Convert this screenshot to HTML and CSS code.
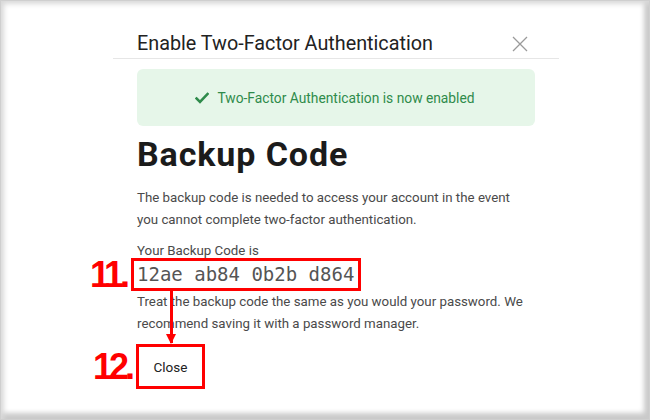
FILE: index.html
```html
<!DOCTYPE html>
<html lang="en">
<head>
<meta charset="utf-8">
<title>Enable Two-Factor Authentication</title>
<link rel="stylesheet" href="styles.css">
</head>
<body>
<div class="frame">
  <div class="dialog">
    <div class="dialog-header">
      <h2 class="dialog-title">Enable Two-Factor Authentication</h2>
      <button class="close-x" aria-label="Close">
        <svg width="16" height="16" viewBox="0 0 16 16"><path d="M1 1 L15 15 M15 1 L1 15" stroke="#9a9a9a" stroke-width="1.3" fill="none"/></svg>
      </button>
    </div>
    <div class="dialog-body">
      <div class="alert">
        <svg class="check" width="14" height="12" viewBox="0 0 14 12"><path d="M1.5 6.5 L5 10 L12.5 2" stroke="#2f8b4b" stroke-width="2.6" fill="none" stroke-linecap="square"/></svg>
        <span>Two-Factor Authentication is now enabled</span>
      </div>
      <h1 class="heading">Backup Code</h1>
      <p class="para">The backup code is needed to access your account in the event you cannot complete two-factor authentication.</p>
      <div class="code-label">Your Backup Code is</div>
      <div class="code-row">
        <span class="anno-label anno-11">11.</span>
        <span class="code">12ae ab84 0b2b d864</span>
        <span class="arrow"></span>
      </div>
      <p class="para para-after">Treat the backup code the same as you would your password. We recommend saving it with a password manager.</p>
      <div class="btn-row">
        <span class="anno-label anno-12">12.</span>
        <button class="btn-close">Close</button>
      </div>
    </div>
  </div>
</div>
</body>
</html>
```
FILE: styles.css
```css
* { box-sizing: border-box; }
html, body { margin: 0; padding: 0; background: #fff; }
body { font-family: Roboto, "Liberation Sans", sans-serif; }

.frame {
  width: 650px;
  height: 420px;
  background: #fff;
  overflow: hidden;
  box-shadow:
    inset 0 0 0 1px #cfcfcf,
    inset 5px 5px 5px -1px #d9d9d9,
    inset -7px -8px 5px -1px #cacaca;
}

.dialog {
  margin-left: 113px;
  width: 446px;
}

.dialog-header {
  display: flex;
  align-items: center;
  justify-content: space-between;
  padding: 32px 24px 2px 24px;
  border-bottom: 1px solid #e6e6e6;
}
.dialog-title {
  margin: 0;
  font-size: 19.8px;
  font-weight: 400;
  line-height: 24px;
  color: #222;
}
.close-x {
  border: 0;
  background: none;
  padding: 0;
  margin-right: 7px;
  width: 16px;
  height: 16px;
  display: flex;
}

.dialog-body {
  padding: 10px 24px 0 24px;
}

.alert {
  height: 57px;
  background: #e6f6e9;
  border-radius: 6px;
  display: flex;
  align-items: center;
  justify-content: center;
  gap: 8px;
  color: #2f8b4b;
  font-size: 13.8px;
  padding-right: 2px;
}
.check { display: block; }

.heading {
  margin: 8px 0 0 0;
  font-size: 34px;
  line-height: 40px;
  font-weight: 700;
  color: #1b1b1b;
  letter-spacing: 0.9px;
}

.para {
  margin: 13px 0 0 0;
  font-size: 13.3px;
  line-height: 22px;
  color: #4a4a4a;
  width: 392px;
}

.code-label {
  margin-top: 11px;
  font-size: 13.3px;
  line-height: 18px;
  color: #4a4a4a;
}

.code-row {
  position: relative;
  margin-left: -6px;
  margin-top: -2px;
  margin-bottom: -4px;
}
.code {
  display: inline-block;
  border: 3px solid #f00;
  padding: 0 4px 0 3px;
  font-family: "DejaVu Sans Mono", "Liberation Mono", monospace;
  font-size: 19px;
  line-height: 27px;
  color: #555;
}
.anno-label {
  position: absolute;
  color: #f00;
  font-family: "Liberation Sans", Arial, sans-serif;
  font-weight: 700;
  font-size: 36px;
  letter-spacing: -4px;
  line-height: 1;
}
.anno-11 {
  right: 100%;
  top: -1px;
  margin-right: 5px;
}
.arrow {
  position: absolute;
  left: 39px;
  top: 33px;
  width: 3px;
  height: 52px;
  background: #f00;
  z-index: 2;
}
.arrow::after {
  content: "";
  position: absolute;
  left: -4px;
  bottom: -1px;
  border-left: 5.5px solid transparent;
  border-right: 5.5px solid transparent;
  border-top: 10px solid #f00;
}

.para-after { margin-top: 4px; }

.btn-row {
  position: relative;
  margin-top: 9px;
  margin-left: -1px;
}
.btn-close {
  display: block;
  width: 69px;
  height: 45px;
  border: 3px solid #f00;
  background: #fff;
  font-family: Roboto, "Liberation Sans", sans-serif;
  font-size: 13.5px;
  color: #222;
  padding: 0;
}
.anno-12 {
  right: 100%;
  top: 5px;
  margin-right: 5px;
}
```
